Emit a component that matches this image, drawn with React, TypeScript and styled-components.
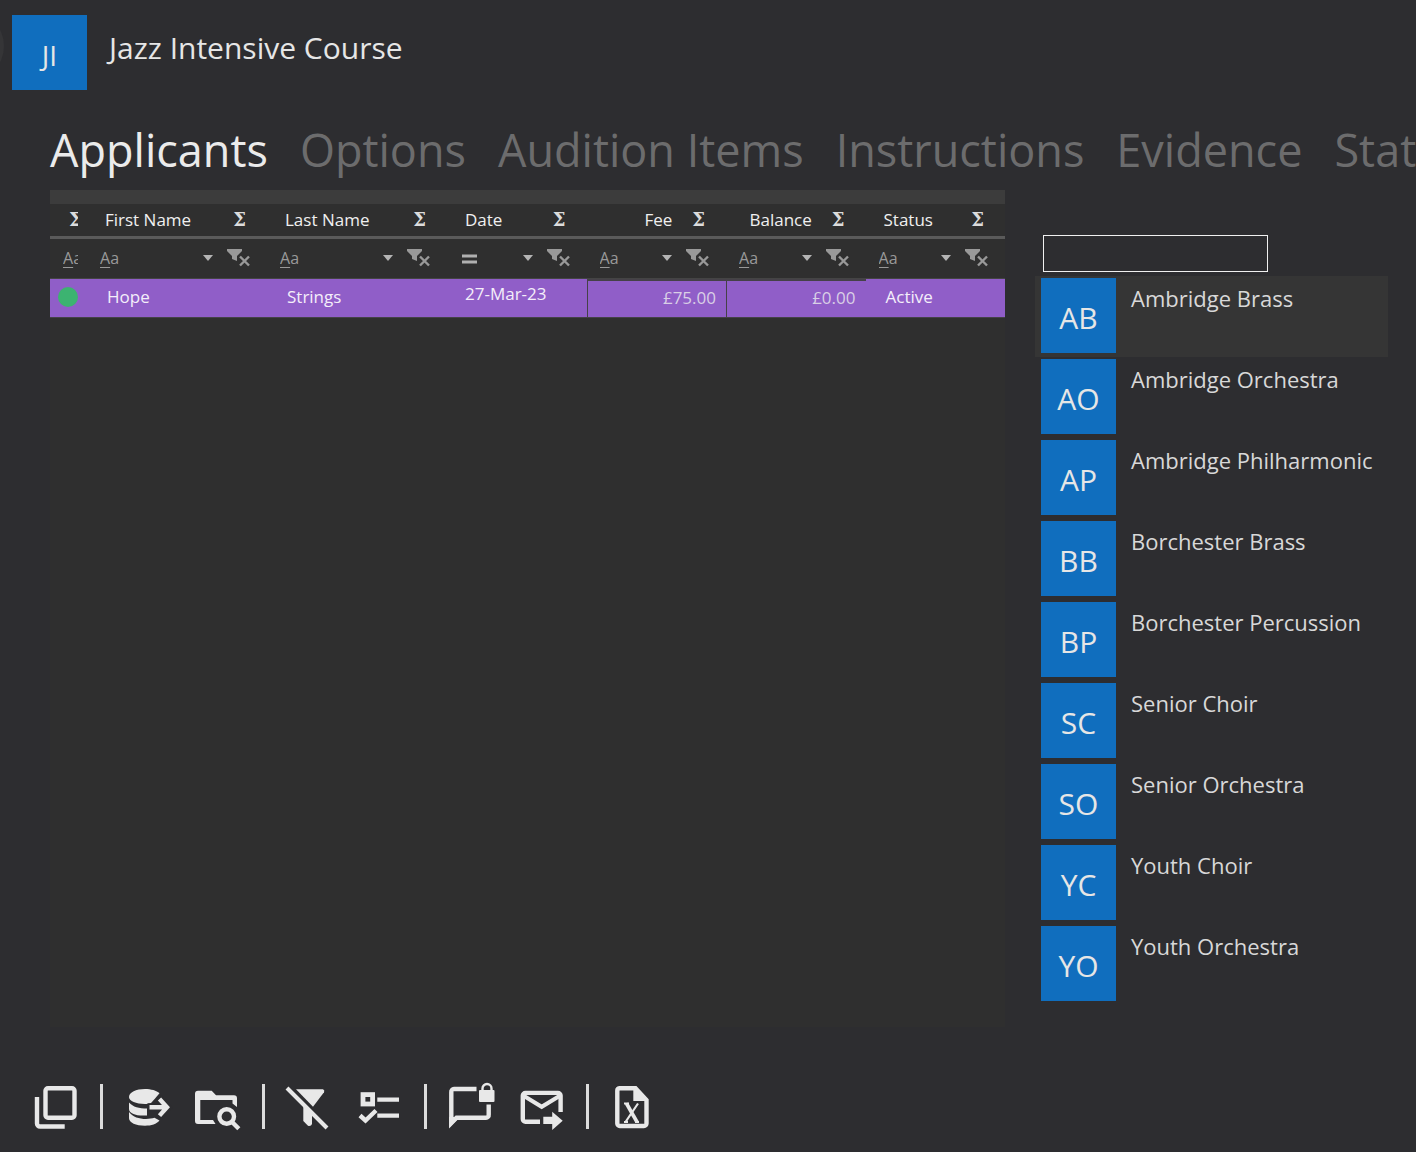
import React from "react";
import styled, { createGlobalStyle } from "styled-components";

const GlobalStyle = createGlobalStyle`
  *, *::before, *::after { box-sizing: border-box; }
  body {
    margin: 0;
    background: #2d2d30;
    color: #e6e6e6;
    font-family: "Open Sans", "Noto Sans", sans-serif;
  }
  button, input { font: inherit; color: inherit; }
`;

const Page = styled.div`
  display: flex;
  flex-direction: column;
  min-height: 100vh;
  overflow: hidden;
  position: relative;
`;

const BackDisc = styled.div`
  position: absolute;
  left: -66px;
  top: 11px;
  width: 70px;
  height: 70px;
  border-radius: 50%;
  background: #353537;
`;

const Header = styled.header`
  display: flex;
  gap: 22px;
  padding: 15px 12px 0;
`;

const Tile = styled.span<{ $size: number }>`
  flex: none;
  width: 75px;
  height: 75px;
  padding-top: 4px;
  display: flex;
  align-items: center;
  justify-content: center;
  background: #106ebe;
  font-size: ${(p) => p.$size}px;
`;

const Title = styled.h1`
  margin: 11px 0 0;
  font-size: 30px;
  line-height: 44px;
  font-weight: 400;
`;

const Tabs = styled.nav`
  display: flex;
  gap: 32px;
  height: 100px;
  padding: 28px 0 0 50px;
  overflow: hidden;
`;

const Tab = styled.button<{ $active?: boolean }>`
  flex: none;
  padding: 0;
  border: 0;
  background: none;
  font-size: 45px;
  line-height: 64px;
  height: 64px;
  white-space: nowrap;
  color: ${(p) => (p.$active ? "#ebebeb" : "#6c6c6d")};
`;

const Main = styled.main`
  flex: 1;
  display: flex;
  gap: 30px;
  padding: 0 28px 0 50px;
`;

const GridPanel = styled.section`
  flex: 1;
  min-width: 0;
  background: #2f2f2f;
  border-top: 14px solid #3c3c3c;
`;

const Grid = styled.table`
  width: 100%;
  table-layout: fixed;
  border-collapse: separate;
  border-spacing: 0;
  font-size: 17px;
  line-height: 24px;
`;

const Col = styled.col<{ $w?: number }>`
  width: ${(p) => (p.$w ? `${p.$w}px` : "auto")};
`;

const HeadCell = styled.th`
  height: 35px;
  padding: 0;
  border-bottom: 3px solid #5a5a5a;
  font-weight: 400;
  color: #f0f0f0;
`;

const HeadInner = styled.div<{ $end?: boolean; $narrow?: boolean }>`
  display: flex;
  align-items: center;
  gap: 20px;
  overflow: hidden;
  margin: ${(p) => (p.$narrow ? "0 9px 0 19px" : "0 21px 0 18px")};
  white-space: nowrap;
  & > span:first-child { margin-left: ${(p) => (p.$end ? "auto" : "0")}; }
  & > span:last-child { margin-left: ${(p) => (p.$end || p.$narrow ? "0" : "auto")}; }
`;

const Sigma = styled.span`
  font-family: "DejaVu Serif", serif;
  font-weight: 700;
  font-size: 18px;
  color: #dcdcdc;
`;

const FilterCell = styled.td`
  height: 40px;
  padding: 0;
  border-bottom: 1px solid #444;
`;

const FilterInner = styled.div<{ $narrow?: boolean }>`
  display: flex;
  align-items: center;
  overflow: hidden;
  margin: ${(p) => (p.$narrow ? "0 9px 0 13px" : "0 16px 0 13px")};
`;

const FilterButton = styled.button`
  flex: none;
  display: flex;
  padding: 0 0 2px;
  border: 0;
  background: none;
  color: #999;
  font-size: 16px;
  line-height: 24px;
`;

const Underlined = styled.span`
  text-decoration: underline;
  text-underline-offset: 3px;
`;

const FilterInput = styled.input`
  flex: 1;
  min-width: 0;
  height: 24px;
  padding: 0 4px;
  border: 0;
  outline: 0;
  background: none;
`;

const Caret = styled(FilterButton)`
  width: 10px;
  margin-right: 14px;
`;

const Cell = styled.td<{ $boxed?: boolean; $high?: boolean; $indent?: number }>`
  height: 39px;
  padding: 0 ${(p) => (p.$boxed ? 10 : 0)}px ${(p) => (p.$high ? 8 : 2)}px ${(p) => p.$indent ?? 10}px;
  background: #905ec8;
  color: ${(p) => (p.$boxed ? "#d9cfe6" : "#f4eefa")};
  border-style: solid;
  border-color: #454148;
  border-width: ${(p) => (p.$boxed ? "2px 0 1px 1px" : "0 0 1px 0")};
  text-align: ${(p) => (p.$boxed ? "right" : "left")};
`;

const Dot = styled.span`
  display: block;
  width: 20px;
  height: 20px;
  border-radius: 50%;
  background: #3cb371;
`;

const Side = styled.aside`
  flex: none;
  width: 353px;
  padding-top: 45px;
`;

const Search = styled.input`
  display: block;
  width: 225px;
  height: 37px;
  margin: 0 0 4px 8px;
  padding: 0 8px;
  border: 1px solid #f0f0f0;
  border-radius: 0;
  outline: 0;
  background: transparent;
  font-size: 20px;
`;

const Groups = styled.ul`
  margin: 0;
  padding: 0;
  list-style: none;
`;

const Group = styled.button<{ $active?: boolean }>`
  display: flex;
  gap: 15px;
  width: 100%;
  padding: 2px 6px 4px;
  border: 0;
  text-align: left;
  background: ${(p) => (p.$active ? "#353535" : "transparent")};
`;

const GroupName = styled.span`
  font-size: 22px;
  line-height: 40px;
  white-space: nowrap;
  color: #d8d8d8;
`;

const Toolbar = styled.footer`
  display: flex;
  align-items: center;
  gap: 21px;
  padding: 55px 31px 22px;
`;

const Tool = styled.button`
  flex: none;
  display: flex;
  padding: 0;
  border: 0;
  background: none;
  color: #e8e8e8;
`;

const Divider = styled.span`
  width: 3px;
  height: 45px;
  background: #dcdcdc;
`;

const FunnelClear = () => (
  <svg width="24" height="20" viewBox="0 0 24 20" fill="currentColor" aria-hidden="true">
    <path d="M0 1h15v2l-5 5v5l-5-2V8L0 3z" />
    <path d="M13 8.500l9 9M22 8.500l-9 9" stroke="currentColor" strokeWidth="2.400" />
  </svg>
);

const ToolSvg = ({ children }: { children: React.ReactNode }) => (
  <svg
    width="48"
    height="48"
    viewBox="0 0 48 48"
    fill="none"
    stroke="currentColor"
    strokeWidth="4.4"
    overflow="visible"
    aria-hidden="true"
  >
    {children}
  </svg>
);

const CopyIcon = () => (
  <ToolSvg>
    <rect x="14.5" y="6.2" width="29" height="29.6" rx="2.5" />
    <path d="M6 15v26.500a3 3 0 0 0 3 3h24.700" />
  </ToolSvg>
);

const DatabaseExportIcon = () => (
  <ToolSvg>
    <g fill="currentColor" stroke="none">
      <path d="M5 15c0-4.500 7-8 16-8 6 0 11.500 1.600 14.500 4.200L31.500 16 27 21c-2 .8-4 1-6 1-9 0-16-3-16-7z" />
      <path d="M5 20.500c4 4.500 10 6 18 6v7C12 34.200 5 31.500 5 27z" />
      <path d="M5 30c4 5 10 7 17 7 3.500 0 6-.5 8.500-1.200l5 2.700c-3 3.500-8 5.200-14.500 5.200-9 0-16-3-16-7.500z" />
    </g>
    <path d="M23.500 25.300h18M35 15.500l8.500 9.800-8.500 9.800" stroke="#2d2d30" strokeWidth="8" />
    <path d="M25.500 25.300h17M35.500 17l7.500 8.300-7.500 8.300" strokeWidth="4.400" />
  </ToolSvg>
);

const FolderSearchIcon = () => (
  <ToolSvg>
    <path
      fill="currentColor"
      stroke="none"
      d="M5 8.700h13.700L23 13.300h18a3 3 0 0 1 3 3V25l-4.500-3.500V18H7.300v20H20l2.500 4H5a3 3 0 0 1-3-3V11.700a3 3 0 0 1 3-3z"
    />
    <circle cx="33.700" cy="34.500" r="7.300" />
    <path d="M38.800 39.800l7 7" />
  </ToolSvg>
);

const FilterOffIcon = () => (
  <ToolSvg>
    <path d="M1 6l40 40" strokeWidth="4" />
    <g fill="currentColor" stroke="none">
      <path d="M10 7.300h27q2 1 1 3L27 24.700z" />
      <path d="M17.300 23.500l8.700 9V42q-1 2.500-4 1.700L17.300 39z" />
    </g>
  </ToolSvg>
);

const ChecklistIcon = () => (
  <ToolSvg>
    <rect x="8" y="12.600" width="9.600" height="9.400" strokeWidth="4.800" />
    <path d="M22.300 17.600H44M22.300 33.600H44M5 33.500l5.500 5L21 28.500" />
  </ToolSvg>
);

const ChatLockIcon = () => (
  <ToolSvg>
    <path d="M28.500 7H6a2.700 2.700 0 0 0-2.700 3v31l5.200-5.300H38a2.700 2.700 0 0 0 2.700-3V22.500" />
    <g fill="currentColor" stroke="none">
      <path d="M1.100 45.700V35h11z" />
      <rect x="31" y="8" width="15.500" height="12" rx="1" />
    </g>
    <path d="M34.500 9V6.500a4.500 4.500 0 0 1 9 0V9" strokeWidth="2.400" />
  </ToolSvg>
);

const MailForwardIcon = () => (
  <ToolSvg>
    <path d="M23 39.700H8.500a2.700 2.700 0 0 1-2.700-2.700V13.600a2.700 2.700 0 0 1 2.700-2.700h32.400a2.700 2.700 0 0 1 2.700 2.700V30" />
    <path d="M7 14l17.700 10.800L42.500 14" strokeWidth="4" />
    <path fill="currentColor" stroke="none" d="M26.300 34.700h8.900v-5l10.500 9-10.500 9.300v-6h-8.900z" />
  </ToolSvg>
);

const SpreadsheetIcon = () => (
  <ToolSvg>
    <path d="M9.500 6.300h16L36.500 18v23.500a2.500 2.500 0 0 1-2.500 2.500H9.800a2.500 2.500 0 0 1-2.500-2.500V8.800a2.500 2.500 0 0 1 2.200-2.500z" />
    <path fill="currentColor" stroke="none" d="M23.300 5l15 14h-15z" />
    <path d="M16.500 21.500L27 40" strokeWidth="3.600" />
    <path d="M28 21.500L15.500 40M14 21.500h5M14 40h4M25 40h4" strokeWidth="2.200" />
  </ToolSvg>
);

const tabs = ["Applicants", "Options", "Audition Items", "Instructions", "Evidence", "Statistics"];

const columns = [
  { label: "First Name" },
  { label: "Last Name" },
  { label: "Date", equals: true },
  { label: "Fee", end: true },
  { label: "Balance", end: true },
  { label: "Status" },
];

const groups = [
  ["AB", "Ambridge Brass"],
  ["AO", "Ambridge Orchestra"],
  ["AP", "Ambridge Philharmonic"],
  ["BB", "Borchester Brass"],
  ["BP", "Borchester Percussion"],
  ["SC", "Senior Choir"],
  ["SO", "Senior Orchestra"],
  ["YC", "Youth Choir"],
  ["YO", "Youth Orchestra"],
];

const tools: ([string, React.FC] | null)[] = [
  ["Copy", CopyIcon],
  null,
  ["Export data", DatabaseExportIcon],
  ["Search folder", FolderSearchIcon],
  null,
  ["Clear filter", FilterOffIcon],
  ["Select columns", ChecklistIcon],
  null,
  ["Private message", ChatLockIcon],
  ["Send mail", MailForwardIcon],
  null,
  ["Export spreadsheet", SpreadsheetIcon],
];

const MatchMode = ({ equals, name }: { equals?: boolean; name: string }) => (
  <FilterButton aria-label={`${name} match mode`}>
    {equals ? (
      <svg width="18" height="12" viewBox="0 0 18 12" aria-hidden="true">
        <path d="M2 4h15M2 10h15" stroke="#b0b0b0" strokeWidth="3" />
      </svg>
    ) : (
      <>
        <Underlined>A</Underlined>a
      </>
    )}
  </FilterButton>
);

export default function App() {
  return (
    <Page>
      <GlobalStyle />
      <BackDisc />
      <Header>
        <Tile $size={28}>JI</Tile>
        <Title>Jazz Intensive Course</Title>
      </Header>
      <Tabs>
        {tabs.map((t, i) => (
          <Tab key={t} $active={i === 0}>
            {t}
          </Tab>
        ))}
      </Tabs>
      <Main>
        <GridPanel>
          <Grid>
            <colgroup>
              <Col $w={37} />
              <Col $w={180} />
              <Col $w={180} />
              <Col />
              <Col />
              <Col />
              <Col />
            </colgroup>
            <thead>
              <tr>
                <HeadCell>
                  <HeadInner $narrow>
                    <Sigma>Σ</Sigma>
                  </HeadInner>
                </HeadCell>
                {columns.map((c) => (
                  <HeadCell key={c.label}>
                    <HeadInner $end={c.end}>
                      <span>{c.label}</span>
                      <Sigma>Σ</Sigma>
                    </HeadInner>
                  </HeadCell>
                ))}
              </tr>
            </thead>
            <tbody>
              <tr>
                <FilterCell>
                  <FilterInner $narrow>
                    <MatchMode name="Marker" />
                  </FilterInner>
                </FilterCell>
                {columns.map((c) => (
                  <FilterCell key={c.label}>
                    <FilterInner>
                      <MatchMode name={c.label} equals={c.equals} />
                      <FilterInput aria-label={`Filter ${c.label}`} />
                      <Caret aria-label={`${c.label} filter values`}>
                        <svg width="10" height="6" viewBox="0 0 10 6" aria-hidden="true">
                          <path d="M0 0h10L5 6z" fill="#b4b4b4" />
                        </svg>
                      </Caret>
                      <FilterButton aria-label={`Clear ${c.label} filter`}>
                        <FunnelClear />
                      </FilterButton>
                    </FilterInner>
                  </FilterCell>
                ))}
              </tr>
              <tr>
                <Cell $indent={8}>
                  <Dot />
                </Cell>
                <Cell $indent={20}>Hope</Cell>
                <Cell $indent={20}>Strings</Cell>
                <Cell $indent={18} $high>
                  27-Mar-23
                </Cell>
                <Cell $boxed>£75.00</Cell>
                <Cell $boxed>£0.00</Cell>
                <Cell $indent={20}>Active</Cell>
              </tr>
            </tbody>
          </Grid>
        </GridPanel>
        <Side>
          <Search aria-label="Search groups" />
          <Groups>
            {groups.map(([initials, name], i) => (
              <li key={name}>
                <Group $active={i === 0}>
                  <Tile $size={30}>{initials}</Tile>
                  <GroupName>{name}</GroupName>
                </Group>
              </li>
            ))}
          </Groups>
        </Side>
      </Main>
      <Toolbar>
        {tools.map((tool, i) => {
          if (!tool) return <Divider key={i} />;
          const [label, Icon] = tool;
          return (
            <Tool key={label} aria-label={label}>
              <Icon />
            </Tool>
          );
        })}
      </Toolbar>
    </Page>
  );
}
